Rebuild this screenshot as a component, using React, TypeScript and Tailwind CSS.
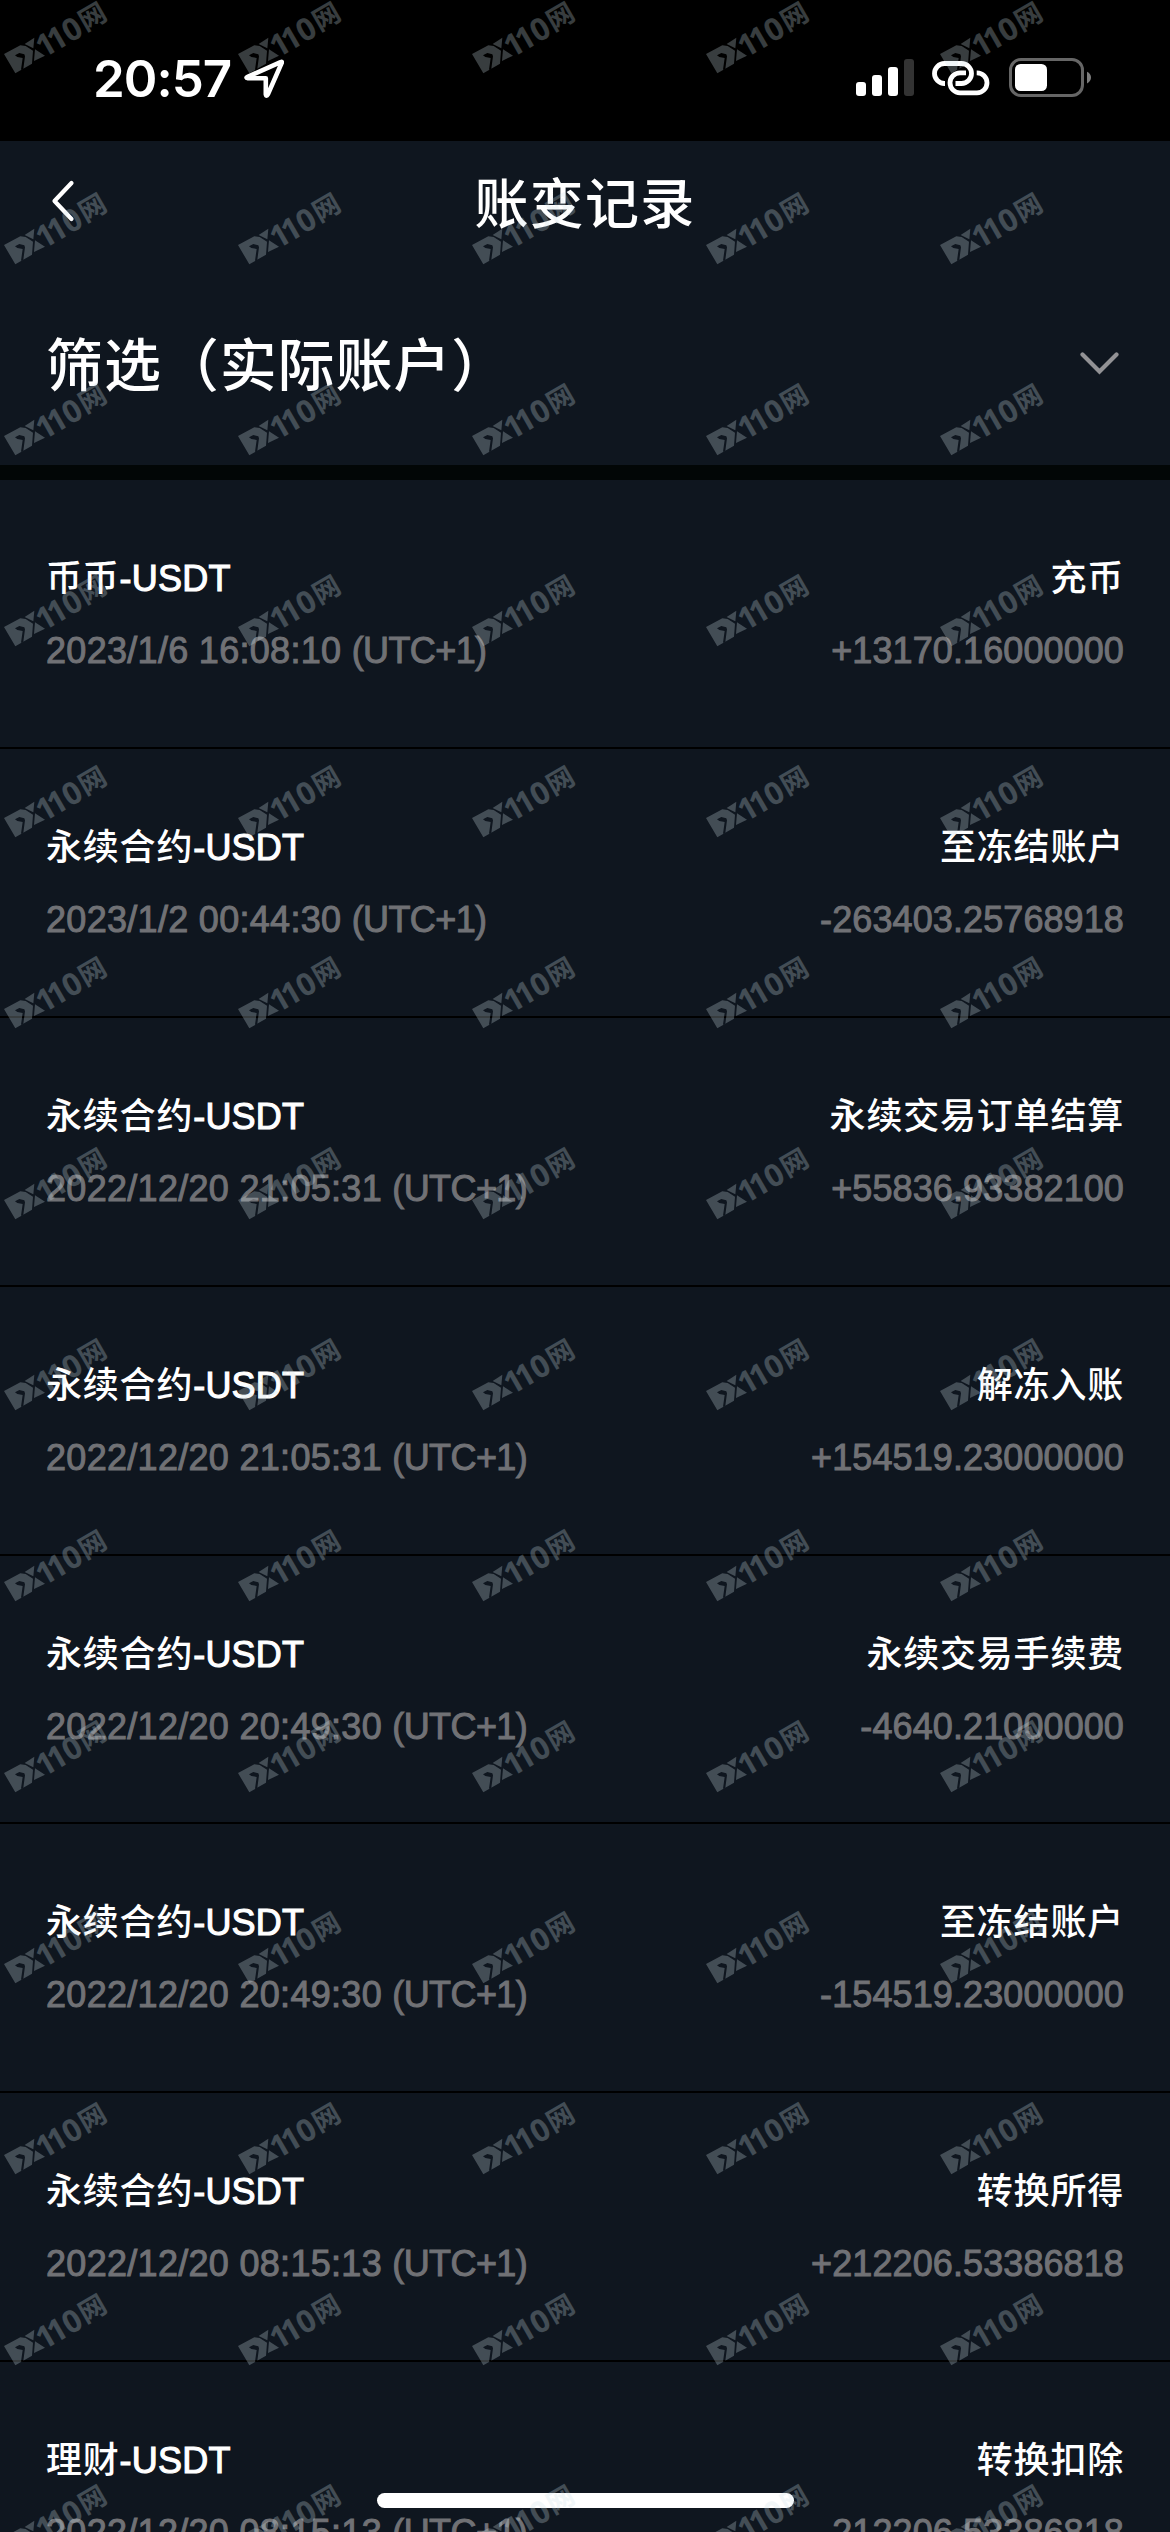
import { clsx } from 'clsx';

// ============================================================================
// Types
// ============================================================================

interface LedgerRecord {
  account: string;
  coin: string;
  time: string;
  zone: string;
  type: string;
  amount: string;
}

// ============================================================================
// Data
// ============================================================================

const ZONE = '(UTC+1)';

const RECORDS: LedgerRecord[] = [
  { account: '币币', coin: 'USDT', time: '2023/1/6 16:08:10', zone: ZONE, type: '充币', amount: '+13170.16000000' },
  { account: '永续合约', coin: 'USDT', time: '2023/1/2 00:44:30', zone: ZONE, type: '至冻结账户', amount: '-263403.25768918' },
  { account: '永续合约', coin: 'USDT', time: '2022/12/20 21:05:31', zone: ZONE, type: '永续交易订单结算', amount: '+55836.93382100' },
  { account: '永续合约', coin: 'USDT', time: '2022/12/20 21:05:31', zone: ZONE, type: '解冻入账', amount: '+154519.23000000' },
  { account: '永续合约', coin: 'USDT', time: '2022/12/20 20:49:30', zone: ZONE, type: '永续交易手续费', amount: '-4640.21000000' },
  { account: '永续合约', coin: 'USDT', time: '2022/12/20 20:49:30', zone: ZONE, type: '至冻结账户', amount: '-154519.23000000' },
  { account: '永续合约', coin: 'USDT', time: '2022/12/20 08:15:13', zone: ZONE, type: '转换所得', amount: '+212206.53386818' },
  { account: '理财', coin: 'USDT', time: '2022/12/20 08:15:13', zone: ZONE, type: '转换扣除', amount: '-212206.53386818' },
];

const WATERMARK_COUNT = 5 * 14;

// ============================================================================
// Status bar
// ============================================================================

function StatusBar() {
  return (
    <div className="flex h-[141px] shrink-0 items-start justify-between bg-black pt-[58px] pr-[79px] pl-[93px] text-white">
      <div className="flex items-start">
        <span className="w-[151px] font-['Inter'] text-[51px] leading-[41px] font-semibold tracking-[-1px] whitespace-nowrap">
          20:57
        </span>
        <svg className="h-10 w-10" viewBox="0 0 40 40" fill="none">
          <path
            d="M3.6 18.8 36.6 4.2Q38.4 3.3 37.6 5.2L24 36.2Q22.4 39 21.8 36.2V20.3H4Q1.2 19.8 3.6 18.8Z"
            stroke="currentColor"
            strokeWidth="4.6"
            strokeLinejoin="round"
          />
        </svg>
      </div>

      <div className="flex h-10 items-start">
        {/* Cellular signal */}
        <div className="flex h-[38px] items-end gap-1.5">
          <span className="h-3.5 w-2.5 rounded-[3px] bg-white" />
          <span className="h-[21px] w-2.5 rounded-[3px] bg-white" />
          <span className="h-[29px] w-2.5 rounded-[3px] bg-white" />
          <span className="h-[37px] w-2.5 rounded-[3px] bg-[#333333]" />
        </div>

        {/* Personal hotspot */}
        <svg className="ml-[18px] h-10 w-[58px]" viewBox="0 0 58 40" fill="none" stroke="currentColor" strokeWidth="4.8">
          <path d="M13 25.5H12.5a10 10 0 0 1 0-20h17a10 10 0 0 1 0 20H23.5" />
          <path d="M34 14.8H28a10 10 0 0 0 0 20h17a10 10 0 0 0 0-20H44.7" />
        </svg>

        {/* Battery */}
        <svg className="ml-[19px] h-10 w-[82px]" viewBox="0 0 82 40" fill="none">
          <rect x="1.5" y="1.5" width="72" height="36" rx="10.5" stroke="#666666" strokeWidth="3" />
          <rect x="6" y="6" width="32" height="27" rx="5.5" fill="currentColor" />
          <path d="M78 13.8q4 2 4 5.8t-4 5.8z" fill="#7d7d7d" />
        </svg>
      </div>
    </div>
  );
}

// ============================================================================
// Header and filter
// ============================================================================

function Header() {
  return (
    <div className="flex h-[126px] shrink-0 items-center px-[50px] text-white">
      <svg className="mt-[-6px] h-11 w-7" viewBox="0 0 28 44" fill="none">
        <path d="M21.5 4 4.5 22 21.5 40" stroke="currentColor" strokeWidth="4.2" strokeLinecap="round" strokeLinejoin="round" />
      </svg>
      <h1 className="flex-1 pt-[2px] pr-7 text-center text-[54px] leading-[72px] font-medium tracking-[1.2px]">
        账变记录
      </h1>
    </div>
  );
}

function FilterBar() {
  return (
    <div className="flex h-[198px] shrink-0 items-start justify-between pt-[61px] pr-[50px] pl-[46px] text-white">
      <span className="text-[57px] leading-[76px] font-medium tracking-[0.9px]">筛选（实际账户）</span>
      <svg className="mt-[23px] h-6 w-10" viewBox="0 0 40 24" fill="none">
        <path d="M2.5 3.5 19.5 20.5 36.5 3.5" stroke="#929295" strokeWidth="4.2" strokeLinecap="round" />
      </svg>
    </div>
  );
}

// ============================================================================
// Record list
// ============================================================================

function RecordRow({ record, isLast }: { record: LedgerRecord; isLast: boolean }) {
  return (
    <li
      className={clsx(
        'h-[268.8px] shrink-0 px-[46px] pt-[63px]',
        'text-[36px] leading-[72px]',
        !isLast && 'border-b-2 border-black'
      )}
    >
      <div className="flex justify-between font-medium text-white">
        <span>
          <span className="tracking-[0.8px]">{record.account}</span>
          <span className="tracking-[0.2px] [-webkit-text-stroke:1.1px_currentColor]">-{record.coin}</span>
        </span>
        <span className="tracking-[0.8px]">{record.type}</span>
      </div>
      <div className="flex justify-between text-[#707175] [-webkit-text-stroke:1px_currentColor]">
        <span>
          <span className="tracking-[0.3px]">{record.time} </span>
          <span className="tracking-[-0.6px]">{record.zone}</span>
        </span>
        <span className="tracking-[0.1px]">{record.amount}</span>
      </div>
    </li>
  );
}

// ============================================================================
// Watermark
// ============================================================================

function Watermark() {
  return (
    <svg className="h-[191px] w-[234px] opacity-27" viewBox="0 0 234 191" fill="#cfe0e8">
      <g transform="scale(0.3333)">
        {/* Badge with the cut-out seven */}
        <path
          fillRule="evenodd"
          d="M12 162 61 136 77 138 99 152 96 191 46 220ZM45 166 58 159 73 163 75 169 70 206 63 209 68 174 52 171Z"
        />
        <path d="M74 132 103 113 100 145Z" />
        <path d="M105 148 135 167 102 183Z" />
      </g>
      <g transform="translate(49.5 55) rotate(-30)">
        <text className="font-['Noto_Sans'] text-[31px] font-bold" x="-7 6 23.4">
          110
        </text>
        <text className="font-['Noto_Sans_CJK_SC'] text-[27px] font-bold" x="42.8" y="-2">
          网
        </text>
      </g>
    </svg>
  );
}

function WatermarkLayer() {
  return (
    <div className="pointer-events-none absolute inset-0 grid grid-cols-[repeat(5,234px)] content-start overflow-hidden">
      {Array.from({ length: WATERMARK_COUNT }, (_, index) => (
        <Watermark key={index} />
      ))}
    </div>
  );
}

// ============================================================================
// Page
// ============================================================================

export default function App() {
  return (
    <div className="relative flex h-[2532px] w-[1170px] flex-col overflow-hidden bg-[#0f161f] font-['Liberation_Sans','Noto_Sans_CJK_SC',sans-serif]">
      <StatusBar />
      <Header />
      <FilterBar />
      <div className="h-[15.4px] shrink-0 bg-[#020606]" />
      <ul className="flex flex-col">
        {RECORDS.map((record, index) => (
          <RecordRow key={index} record={record} isLast={index === RECORDS.length - 1} />
        ))}
      </ul>

      {/* Home indicator */}
      <div className="absolute bottom-6 left-[377px] h-[15px] w-[417px] rounded-full bg-white" />

      <WatermarkLayer />
    </div>
  );
}
